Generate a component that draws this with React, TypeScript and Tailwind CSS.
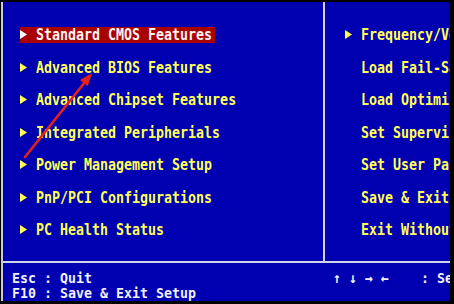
import React from "react";

const leftItems = [
  "Standard CMOS Features",
  "Advanced BIOS Features",
  "Advanced Chipset Features",
  "Integrated Peripherials",
  "Power Management Setup",
  "PnP/PCI Configurations",
  "PC Health Status",
];

const rightItems: { text: string; arrow: boolean }[] = [
  { text: "Frequency/Voltage Control", arrow: true },
  { text: "Load Fail-Safe Defaults", arrow: false },
  { text: "Load Optimized Defaults", arrow: false },
  { text: "Set Supervisor Password", arrow: false },
  { text: "Set User Password", arrow: false },
  { text: "Save & Exit Setup", arrow: false },
  { text: "Exit Without Saving", arrow: false },
];

function Tri({ color }: { color: string }) {
  return (
    <svg width="7" height="9" viewBox="0 0 7 9" className="block">
      <polygon points="0,0 7,4.5 0,9" fill={color} />
    </svg>
  );
}

export default function App() {
  return (
    <div className="relative w-[454px] h-[304px] bg-black pt-[2px] pr-[4px] pb-[3px] pl-[1px] font-['DejaVu_Sans_Mono',monospace] font-bold text-[13.3px] leading-none">
      <div className="h-full border-l-2 border-[#c8c8dc] bg-[#0000b0] flex flex-col">
        <div className="flex h-[261px] border-b-2 border-[#d4d4e8] shrink-0">
          <div className="w-[322px] border-r-2 border-[#d4d4e8] pt-[16.5px] pl-[17px] shrink-0">
            {leftItems.map((t, i) => (
              <div key={t} className="h-[32.5px] flex items-center">
                <div
                  className={
                    "h-[16px] flex items-center pr-[3px] " +
                    (i === 0 ? "bg-[#a80000] text-[#fff2f2]" : "text-[#ffff58]")
                  }
                >
                  <div className="w-[16px] flex items-center">
                    <Tri color={i === 0 ? "#ffffff" : "#ffff58"} />
                  </div>
                  <span className="whitespace-pre inline-block scale-y-[1.15]">{t}</span>
                </div>
              </div>
            ))}
          </div>
          <div className="flex-1 overflow-hidden pt-[16.5px] pl-[20px]">
            {rightItems.map((r) => (
              <div key={r.text} className="h-[32.5px] flex items-center text-[#ffff58] whitespace-pre">
                <div className="w-[16px] flex items-center shrink-0">
                  {r.arrow ? <Tri color="#ffff58" /> : null}
                </div>
                <span className="inline-block scale-y-[1.15]">{r.text}</span>
              </div>
            ))}
          </div>
        </div>
        <div className="flex-1 overflow-hidden pt-[8px] pl-[9px] text-[#f0f0ff] leading-[15px] whitespace-pre">
          <div className="flex">
            <div className="w-[321px] shrink-0 scale-y-[1.1]">Esc : Quit</div>
            <div className="scale-y-[1.1]">↑ ↓ → ←    : Select Item</div>
          </div>
          <div className="flex">
            <div className="w-[321px] shrink-0 scale-y-[1.1]">F10 : Save &amp; Exit Setup</div>
          </div>
        </div>
      </div>
      <svg
        className="absolute left-0 top-0 pointer-events-none"
        width="454"
        height="304"
        viewBox="0 0 454 304"
      >
        <line x1="25" y1="157" x2="84" y2="83.2" stroke="#e8201c" strokeWidth="2.6" strokeLinecap="round" />
        <polygon points="92,73 87.8,86.3 80,80.1" fill="#e8201c" />
      </svg>
    </div>
  );
}
